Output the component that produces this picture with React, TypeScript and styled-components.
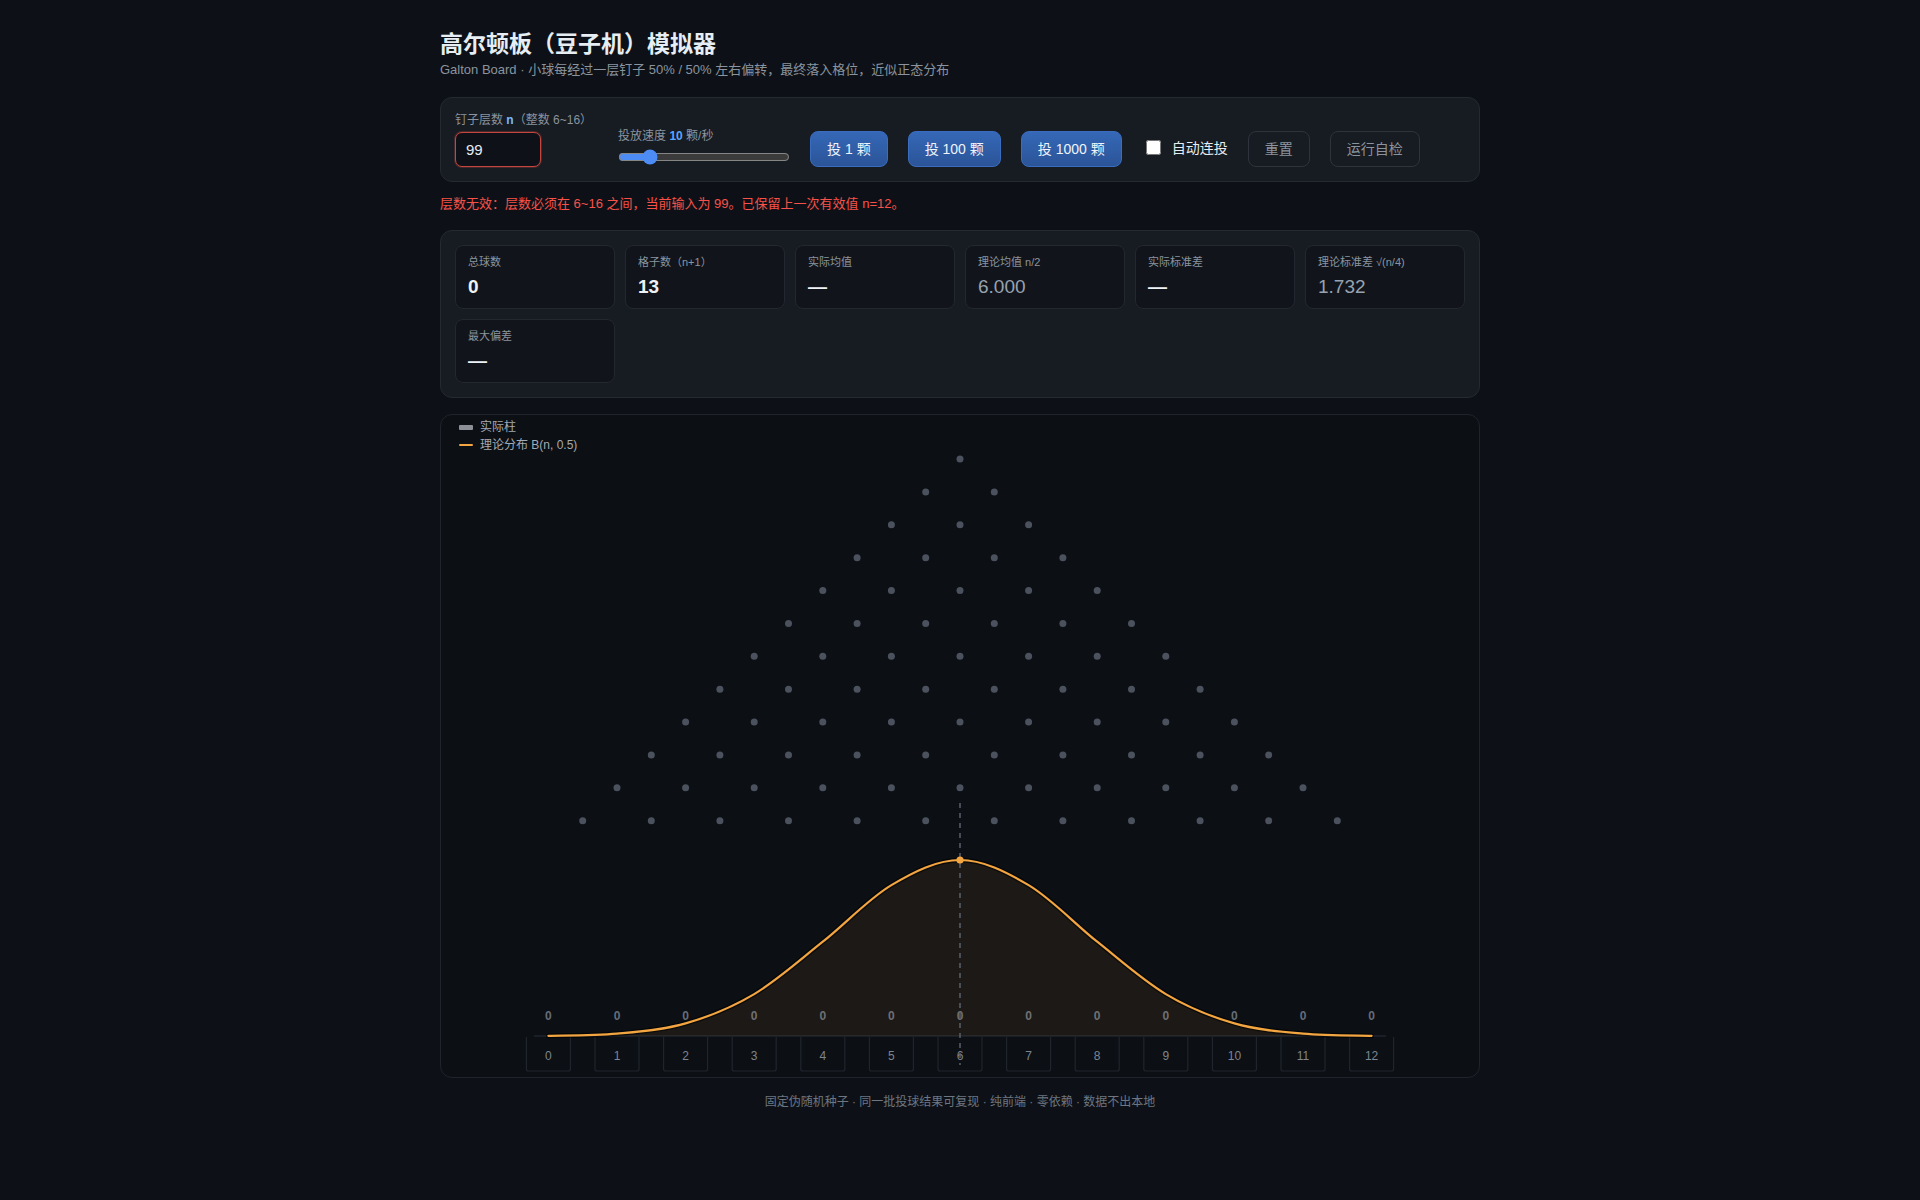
import React from "react";
import styled, { createGlobalStyle } from "styled-components";

const FONT = `"Liberation Sans", "Noto Sans CJK SC", sans-serif`;

const Global = createGlobalStyle`
  html, body { margin: 0; padding: 0; background: #0d1117; }
  body { font-family: ${FONT}; color: #e6edf3; }
  * { box-sizing: border-box; }
`;

const Page = styled.div`
  width: 1040px;
  margin: 0 auto;
  padding: 29px 0 60px;
`;

const Title = styled.h1`
  margin: 0;
  font-size: 23px;
  line-height: 30px;
  font-weight: 700;
  color: #e6edf3;
`;

const Subtitle = styled.p`
  margin: 2px 0 0;
  font-size: 13px;
  line-height: 18px;
  color: #8b949e;
`;

const Panel = styled.section<{ $mt?: number }>`
  margin-top: ${(p) => p.$mt ?? 0}px;
  background: #171b22;
  border: 1px solid #242932;
  border-radius: 12px;
  padding: 14px;
`;

const Controls = styled.div`
  display: flex;
  align-items: flex-end;
  flex-wrap: wrap;
  gap: 20px;
`;

const Field = styled.div<{ $gap: number; $mr?: number }>`
  display: flex;
  flex-direction: column;
  gap: ${(p) => p.$gap}px;
  margin-right: ${(p) => p.$mr ?? 0}px;
`;

const FieldLabel = styled.label`
  font-size: 12px;
  line-height: 16px;
  color: #8b949e;
  white-space: nowrap;
`;

const Em = styled.b<{ $c: string }>`
  color: ${(p) => p.$c};
  font-weight: 700;
`;

const NumberInput = styled.input`
  width: 86px;
  height: 35px;
  background: #0e1117;
  border: 1px solid #c4463f;
  border-radius: 7px;
  box-shadow: 0 0 0 1px rgba(248, 81, 73, 0.22);
  color: #e6edf3;
  font-family: ${FONT};
  font-size: 15px;
  padding: 0 10px;
  outline: none;
`;

const Range = styled.input`
  width: 172px;
  height: 16px;
  margin: 2px 0;
  accent-color: #4d8cf5;
  color-scheme: dark;
`;

const Button = styled.button<{ $primary?: boolean }>`
  height: 36px;
  padding: 0 16px;
  border-radius: 8px;
  font-family: ${FONT};
  font-size: 14px;
  line-height: 34px;
  white-space: nowrap;
  cursor: pointer;
  border: 1px solid ${(p) => (p.$primary ? "#3a6dc0" : "#2e333c")};
  background: ${(p) =>
    p.$primary ? "linear-gradient(180deg, #3568b7 0%, #2b5498 100%)" : "transparent"};
  color: ${(p) => (p.$primary ? "#f0f4fa" : "#8b949e")};
`;

const CheckLabel = styled.label`
  display: flex;
  align-items: center;
  gap: 11px;
  height: 36px;
  padding-bottom: 3px;
  font-size: 14px;
  line-height: 18px;
  color: #e6edf3;
  white-space: nowrap;
`;

const Check = styled.input`
  width: 15px;
  height: 15px;
  margin: 0 0 0 4px;
`;

const ErrorText = styled.div`
  margin-top: 12px;
  font-size: 13px;
  line-height: 20px;
  color: #f85149;
`;

const StatsGrid = styled.div`
  display: grid;
  grid-template-columns: repeat(6, 1fr);
  gap: 10px;
`;

const StatCard = styled.div`
  background: #11151b;
  border: 1px solid #222730;
  border-radius: 8px;
  padding: 9px 12px;
  height: 64px;
`;

const StatLabel = styled.div`
  font-size: 11px;
  line-height: 14px;
  color: #8b949e;
  white-space: nowrap;
`;

const StatValue = styled.div<{ $muted?: boolean }>`
  margin-top: 6px;
  font-size: 19px;
  line-height: 24px;
  font-weight: ${(p) => (p.$muted ? 400 : 700)};
  color: ${(p) => (p.$muted ? "#98a2b0" : "#eef2f7")};
`;

const ChartPanel = styled.section`
  position: relative;
  margin-top: 16px;
  background: #0c0f14;
  border: 1px solid #1f242c;
  border-radius: 12px;
  overflow: hidden;
`;

const Legend = styled.div`
  position: absolute;
  top: 3px;
  left: 18px;
  display: flex;
  flex-direction: column;
  font-size: 12px;
  line-height: 18px;
  color: #a3aab3;
`;

const LegendItem = styled.div`
  display: flex;
  align-items: center;
  gap: 7px;
`;

const Swatch = styled.span<{ $h: number; $c: string }>`
  display: inline-block;
  width: 14px;
  height: ${(p) => p.$h}px;
  border-radius: 1px;
  background: ${(p) => p.$c};
`;

const Board = styled.svg`
  display: block;
  width: 1038px;
  height: 662px;
`;

const CountText = styled.text`
  font-family: ${FONT};
  font-size: 12px;
  font-weight: 700;
  fill: #646c78;
`;

const BinText = styled.text`
  font-family: ${FONT};
  font-size: 12px;
  fill: #7d8590;
`;

const Footer = styled.footer`
  margin-top: 16px;
  text-align: center;
  font-size: 12px;
  line-height: 16px;
  color: #6e7681;
`;

/* ---------- board geometry ---------- */
const N = 12;
const CX = 519;
const DX = 68.6;
const TOP = 44;
const DY = 32.88;
const BASE = 621;
const CURVE_H = 176;

function binom(n: number, k: number) {
  let r = 1;
  for (let i = 1; i <= k; i++) r = (r * (n - k + i)) / i;
  return r;
}

const pmf = Array.from({ length: N + 1 }, (_, k) => binom(N, k) / 2 ** N);
const pmax = Math.max(...pmf);
const binX = (k: number) => CX + (k - N / 2) * DX;
const pts: [number, number][] = pmf.map((p, k) => [binX(k), BASE - (p / pmax) * CURVE_H]);

function smooth(p: [number, number][]) {
  let d = `M ${p[0][0]} ${p[0][1]}`;
  for (let i = 0; i < p.length - 1; i++) {
    const p0 = p[i - 1] || p[i];
    const p1 = p[i];
    const p2 = p[i + 1];
    const p3 = p[i + 2] || p2;
    const c1x = p1[0] + (p2[0] - p0[0]) / 6;
    const c1y = p1[1] + (p2[1] - p0[1]) / 6;
    const c2x = p2[0] - (p3[0] - p1[0]) / 6;
    const c2y = p2[1] - (p3[1] - p1[1]) / 6;
    d += ` C ${c1x} ${c1y} ${c2x} ${c2y} ${p2[0]} ${p2[1]}`;
  }
  return d;
}

const curveD = smooth(pts);
const areaD = `${curveD} L ${binX(N)} ${BASE} L ${binX(0)} ${BASE} Z`;

const pegs: { x: number; y: number }[] = [];
for (let i = 0; i < N; i++) {
  for (let j = 0; j <= i; j++) {
    pegs.push({ x: CX + (j - i / 2) * DX, y: TOP + i * DY });
  }
}

const bins = Array.from({ length: N + 1 }, (_, k) => k);

function GaltonBoard() {
  return (
    <Board viewBox="0 0 1038 662">
      {pegs.map((p, i) => (
        <circle key={i} cx={p.x} cy={p.y} r={3.5} fill="#4b525e" />
      ))}
      <line x1={binX(0) - 14.5} y1={BASE} x2={binX(N) + 14.5} y2={BASE} stroke="#1f242c" strokeWidth={1.5} />
      {bins.map((k) => {
        const x0 = binX(k) - 22;
        const x1 = binX(k) + 22;
        return (
          <g key={k}>
            <path
              d={`M ${x0} ${BASE + 1} V ${BASE + 33} Q ${x0} ${BASE + 35} ${x0 + 2} ${BASE + 35} H ${x1 - 2} Q ${x1} ${BASE + 35} ${x1} ${BASE + 33} V ${BASE + 1}`}
              fill="none"
              stroke="#20252d"
              strokeWidth={1.2}
            />
            <BinText x={binX(k)} y={BASE + 24} textAnchor="middle">
              {k}
            </BinText>
            <CountText x={binX(k)} y={BASE - 16} textAnchor="middle">
              0
            </CountText>
          </g>
        );
      })}
      <path d={areaD} fill="rgba(240, 162, 60, 0.075)" />
      <line x1={CX} y1={388} x2={CX} y2={650} stroke="#59606b" strokeWidth={1.5} strokeDasharray="5 5" />
      <path d={curveD} fill="none" stroke="rgba(0,0,0,0.55)" strokeWidth={5} strokeLinecap="round" />
      <path d={curveD} fill="none" stroke="#f2a540" strokeWidth={2.2} strokeLinecap="round" />
      <circle cx={CX} cy={BASE - CURVE_H} r={3.6} fill="#f2a540" />
    </Board>
  );
}

const stats: { label: string; value: string; muted?: boolean }[] = [
  { label: "总球数", value: "0" },
  { label: "格子数（n+1）", value: "13" },
  { label: "实际均值", value: "—" },
  { label: "理论均值 n/2", value: "6.000", muted: true },
  { label: "实际标准差", value: "—" },
  { label: "理论标准差 √(n/4)", value: "1.732", muted: true },
  { label: "最大偏差", value: "—" },
];

export default function App() {
  return (
    <>
      <Global />
      <Page>
        <header>
          <Title>高尔顿板（豆子机）模拟器</Title>
          <Subtitle>Galton Board · 小球每经过一层钉子 50% / 50% 左右偏转，最终落入格位，近似正态分布</Subtitle>
        </header>

        <Panel $mt={18}>
          <Controls>
            <Field $gap={4} $mr={6}>
              <FieldLabel>
                钉子层数 <Em $c="#79b8ff">n</Em>（整数 6~16）
              </FieldLabel>
              <NumberInput type="text" defaultValue="99" />
            </Field>
            <Field $gap={3}>
              <FieldLabel>
                投放速度 <Em $c="#58a6ff">10</Em> 颗/秒
              </FieldLabel>
              <Range type="range" min={1} max={60} defaultValue={10} />
            </Field>
            <Button $primary>投 1 颗</Button>
            <Button $primary>投 100 颗</Button>
            <Button $primary>投 1000 颗</Button>
            <CheckLabel>
              <Check type="checkbox" />
              自动连投
            </CheckLabel>
            <Button>重置</Button>
            <Button>运行自检</Button>
          </Controls>
        </Panel>

        <ErrorText>层数无效：层数必须在 6~16 之间，当前输入为 99。已保留上一次有效值 n=12。</ErrorText>

        <Panel $mt={16}>
          <StatsGrid>
            {stats.map((s) => (
              <StatCard key={s.label}>
                <StatLabel>{s.label}</StatLabel>
                <StatValue $muted={s.muted}>{s.value}</StatValue>
              </StatCard>
            ))}
          </StatsGrid>
        </Panel>

        <ChartPanel>
          <GaltonBoard />
          <Legend>
            <LegendItem>
              <Swatch $h={5} $c="#8d9197" />
              实际柱
            </LegendItem>
            <LegendItem>
              <Swatch $h={2} $c="#f2a540" />
              理论分布 B(n, 0.5)
            </LegendItem>
          </Legend>
        </ChartPanel>

        <Footer>固定伪随机种子 · 同一批投球结果可复现 · 纯前端 · 零依赖 · 数据不出本地</Footer>
      </Page>
    </>
  );
}
